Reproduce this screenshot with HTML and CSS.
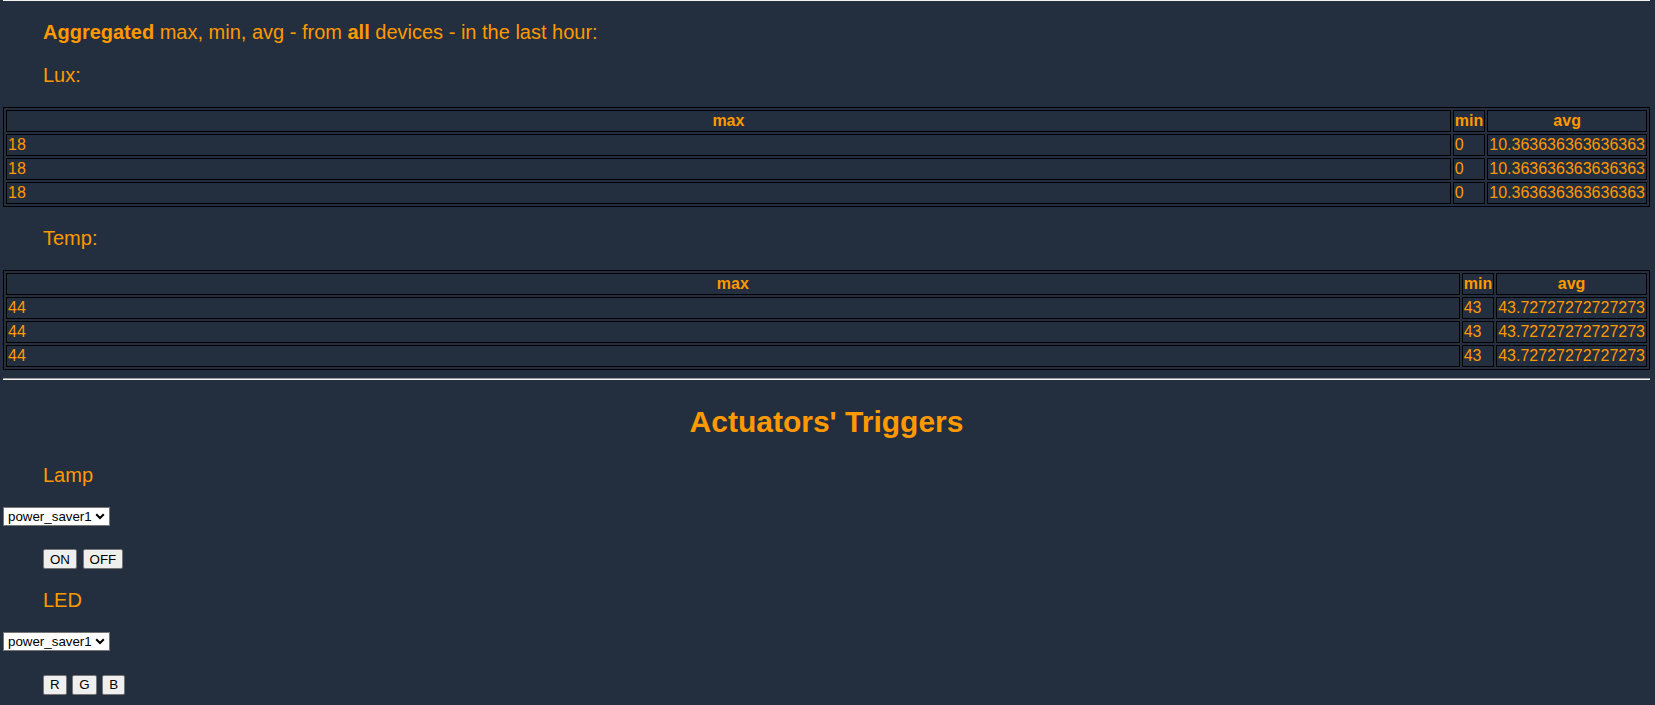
FILE: index.html
```html
<!DOCTYPE html>
<html>
<head>
<meta charset="utf-8">
<title>Dashboard</title>
<link rel="stylesheet" href="styles.css">
</head>
<body>
<hr class="rule rule-top">
<p class="line"><b>Aggregated</b> max, min, avg - from <b>all</b> devices - in the last hour:</p>
<p class="line">Lux:</p>
<table class="agg">
  <thead>
    <tr><th class="wide">max</th><th>min</th><th>avg</th></tr>
  </thead>
  <tbody>
    <tr><td>18</td><td>0</td><td>10.363636363636363</td></tr>
    <tr><td>18</td><td>0</td><td>10.363636363636363</td></tr>
    <tr><td>18</td><td>0</td><td>10.363636363636363</td></tr>
  </tbody>
</table>
<p class="line">Temp:</p>
<table class="agg">
  <thead>
    <tr><th class="wide">max</th><th>min</th><th>avg</th></tr>
  </thead>
  <tbody>
    <tr><td>44</td><td>43</td><td>43.72727272727273</td></tr>
    <tr><td>44</td><td>43</td><td>43.72727272727273</td></tr>
    <tr><td>44</td><td>43</td><td>43.72727272727273</td></tr>
  </tbody>
</table>
<hr class="rule">
<h2 class="title">Actuators' Triggers</h2>
<p class="line">Lamp</p>
<select class="profile"><option>power_saver1</option></select>
<p class="line"><button class="btn">ON</button> <button class="btn">OFF</button></p>
<p class="line">LED</p>
<select class="profile"><option>power_saver1</option></select>
<p class="line"><button class="btn">R</button> <button class="btn">G</button> <button class="btn">B</button></p>
</body>
</html>
```
FILE: styles.css
```css
html, body {
  background: #232f3e;
}
body {
  margin: 0;
  padding: 0 5px 40px 3px;
  font-family: "Liberation Sans", Arial, sans-serif;
  font-size: 20px;
  color: #ff9900;
}
.rule {
  border: 0;
  border-top: 1px solid #9a9a9a;
  border-bottom: 1px solid #f2f2f2;
  height: 0;
  margin: 8px 0;
}
.rule-top {
  margin: -1px 0 20px;
}
.line {
  margin: 20px 0 20px 40px;
}
.line b {
  font-weight: bold;
}
.agg {
  width: 100%;
  border: 1px solid #000;
  border-spacing: 2px;
  font-size: 16px;
  color: #ff9900;
}
.agg th,
.agg td {
  border: 1px solid #000;
  padding: 1px;
  white-space: nowrap;
  text-align: left;
}
.agg th {
  font-weight: bold;
  text-align: center;
}
.agg .wide {
  width: 100%;
}
.title {
  margin: 24.9px 0;
  font-size: 30px;
  font-weight: bold;
  text-align: center;
}
.profile {
  display: block;
  margin: 0;
  width: 107px;
  height: 19px;
  padding: 0 0 0 4px;
  border: 1px solid #767676;
  border-radius: 0;
  background: #fff url("data:image/svg+xml;utf8,<svg xmlns='http://www.w3.org/2000/svg' width='10' height='7' viewBox='0 0 10 7'><path d='M1.2 1.2 L5 5 L8.8 1.2' fill='none' stroke='black' stroke-width='2'/></svg>") no-repeat right 4px center;
  -webkit-appearance: none;
  appearance: none;
  font-family: "Liberation Sans", Arial, sans-serif;
  font-size: 13.33px;
  color: #000;
}
.btn {
  height: 20px;
  padding: 1px 6px;
  border: 1px solid #767676;
  border-radius: 2px;
  background: #efefef;
  font-family: "Liberation Sans", Arial, sans-serif;
  font-size: 13.33px;
  color: #000;
  margin: 0;
}
```
